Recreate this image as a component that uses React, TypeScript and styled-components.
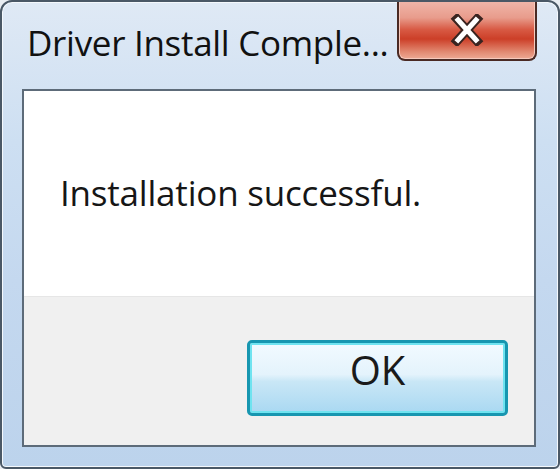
import React from "react";
import styled, { createGlobalStyle } from "styled-components";

const GlobalStyle = createGlobalStyle`
  html, body {
    margin: 0;
    padding: 0;
    background: #e9edf2;
  }
`;

const Window = styled.div`
  width: 560px;
  height: 469px;
  box-sizing: border-box;
  display: flex;
  flex-direction: column;
  border: 2px solid #4a5866;
  border-radius: 12px 12px 6px 6px;
  background: linear-gradient(180deg, #dfe9f5 0%, #cddff2 30%, #c4d8ef 60%, #bcd3ec 100%);
  box-shadow: inset 0 0 0 1px #f4f8fc;
  overflow: hidden;
  font-family: "Open Sans", "Noto Sans", sans-serif;
`;

const TitleBar = styled.div`
  height: 87px;
  flex: none;
  display: flex;
  justify-content: space-between;
  align-items: flex-start;
  padding-left: 25px;
  padding-right: 21px;
`;

const Title = styled.div`
  margin-top: 17px;
  font-size: 35px;
  line-height: 48px;
  color: #111;
  letter-spacing: -0.3px;
  white-space: nowrap;
`;

const CloseButton = styled.div`
  margin-top: -2px;
  width: 140px;
  height: 61px;
  box-sizing: border-box;
  display: flex;
  align-items: center;
  justify-content: center;
  border: 2px solid #4a2a24;
  border-top: none;
  border-radius: 0 0 8px 8px;
  background: linear-gradient(
    180deg,
    #f0b8ac 0%,
    #e89c8c 30%,
    #d85a44 50%,
    #cc3f28 66%,
    #e28a72 88%,
    #eeaa94 100%
  );
  box-shadow: inset 0 0 0 1px #f6c9bc;
`;

const Client = styled.div`
  flex: 1;
  margin: 0 22px 20px 20px;
  display: flex;
  flex-direction: column;
  border: 2px solid #5d6b79;
`;

const MessageArea = styled.div`
  height: 205px;
  flex: none;
  background: #ffffff;
  padding-left: 36px;
  box-sizing: border-box;
`;

const Message = styled.div`
  padding-top: 79px;
  font-size: 35px;
  line-height: 46px;
  color: #161616;
  letter-spacing: -0.2px;
`;

const Footer = styled.div`
  flex: 1;
  background: #f0f0f0;
  border-top: 1px solid #e6e6e6;
  display: flex;
  justify-content: flex-end;
  align-items: flex-start;
  padding: 43px 26px 0 0;
`;

const Button = styled.button<{ $focused?: boolean }>`
  width: 261px;
  height: 76px;
  box-sizing: border-box;
  border: 3px solid ${(p) => (p.$focused ? "#1796b0" : "#707070")};
  border-radius: 5px;
  background: linear-gradient(180deg, #f2faff 0%, #e4f3fc 45%, #c9e7f6 55%, #a9d8f2 100%);
  box-shadow: inset 0 0 0 2px #6fe3f0;
  font-family: "Open Sans", "Noto Sans", sans-serif;
  font-size: 40px;
  color: #1a1a1a;
  padding: 0 0 16px 0;
  line-height: 1;
`;

const CloseGlyph = () => (
  <svg width="38" height="32" viewBox="0 0 38 32">
    <path
      d="M9 5 L29 27 M29 5 L9 27"
      stroke="#3a2420"
      strokeWidth="9"
      strokeLinecap="square"
      fill="none"
    />
    <path
      d="M10 6 L28 26 M28 6 L10 26"
      stroke="#ffffff"
      strokeWidth="5"
      strokeLinecap="square"
      fill="none"
    />
  </svg>
);

const App: React.FC = () => {
  return (
    <>
      <GlobalStyle />
      <Window>
        <TitleBar>
          <Title>Driver Install Comple...</Title>
          <CloseButton>
            <CloseGlyph />
          </CloseButton>
        </TitleBar>
        <Client>
          <MessageArea>
            <Message>Installation successful.</Message>
          </MessageArea>
          <Footer>
            <Button $focused>OK</Button>
          </Footer>
        </Client>
      </Window>
    </>
  );
};

export default App;
